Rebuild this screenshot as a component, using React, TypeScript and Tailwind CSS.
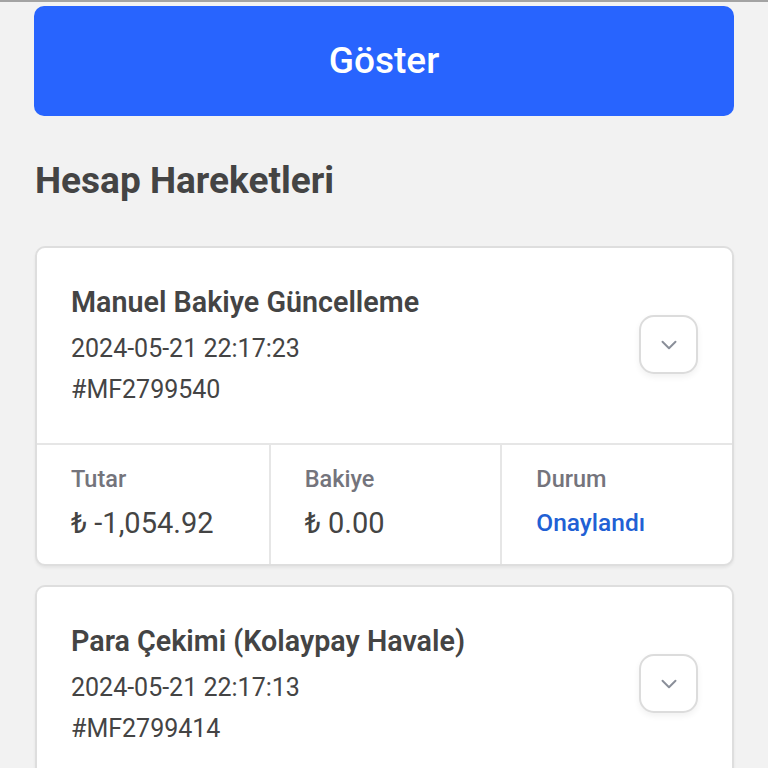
import { ChevronDown } from "lucide-react";

interface Movement {
  title: string;
  date: string;
  code: string;
  amount: string;
  balance: string;
  status: string;
}

const movements: Movement[] = [
  {
    title: "Manuel Bakiye Güncelleme",
    date: "2024-05-21 22:17:23",
    code: "#MF2799540",
    amount: "₺ -1,054.92",
    balance: "₺ 0.00",
    status: "Onaylandı",
  },
  {
    title: "Para Çekimi (Kolaypay Havale)",
    date: "2024-05-21 22:17:13",
    code: "#MF2799414",
    amount: "₺ -500.00",
    balance: "₺ 1,054.92",
    status: "Onaylandı",
  },
];

function MovementCard({ item }: { item: Movement }) {
  return (
    <div className="overflow-hidden rounded-[10px] border-2 border-[#dedede] bg-white shadow-[0_2px_3px_rgba(0,0,0,0.06)]">
      <div className="flex items-center justify-between px-[34px] pt-[34px] pb-[36px]">
        <div>
          <div className="text-[28.7px] font-semibold leading-[40px] text-[#444]">{item.title}</div>
          <div className="mt-[10px] text-[25px] leading-[34px] text-[#444]">{item.date}</div>
          <div className="mt-[7px] text-[25px] leading-[34px] text-[#444]">{item.code}</div>
        </div>
        <button className="flex h-[59px] w-[59px] items-center justify-center rounded-[15px] border-2 border-[#dcdcdc] bg-white shadow-[0_3px_6px_rgba(0,0,0,0.06)]">
          <ChevronDown size={26} strokeWidth={1.8} className="text-[#8a8f99]" />
        </button>
      </div>
      <div className="grid grid-cols-3 border-t-2 border-[#e6e6e6]">
        <div className="px-[34px] pt-[18px] pb-[23px]">
          <div className="text-[23.5px] font-medium leading-[32px] text-[#74747c]">Tutar</div>
          <div className="mt-[10px] text-[29px] leading-[36px] text-[#444]">{item.amount}</div>
        </div>
        <div className="border-l-2 border-[#e6e6e6] px-[34px] pt-[18px] pb-[23px]">
          <div className="text-[23.5px] font-medium leading-[32px] text-[#74747c]">Bakiye</div>
          <div className="mt-[10px] text-[29px] leading-[36px] text-[#444]">{item.balance}</div>
        </div>
        <div className="border-l-2 border-[#e6e6e6] px-[34px] pt-[18px] pb-[23px]">
          <div className="text-[23.5px] font-medium leading-[32px] text-[#74747c]">Durum</div>
          <div className="mt-[10px] text-[24.5px] font-medium leading-[36px] text-[#2160d4]">{item.status}</div>
        </div>
      </div>
    </div>
  );
}

export default function App() {
  return (
    <div className="min-h-screen bg-[#f2f2f2] font-['Roboto',sans-serif]">
      <div className="h-[2px] bg-[#a3a3a3]" />
      <div className="px-[34px] pt-[4px] pb-[40px]">
        <button className="flex h-[110px] w-full items-center justify-center rounded-[10px] bg-[#2864fe] text-[37px] font-medium text-white">
          Göster
        </button>
        <h2 className="mt-[43px] pl-[1px] text-[37px] font-bold leading-[44px] text-[#444]">Hesap Hareketleri</h2>
        <div className="mt-[43px] flex flex-col gap-[19px] pl-[1px]">
          {movements.map((m) => (
            <MovementCard key={m.code} item={m} />
          ))}
        </div>
      </div>
    </div>
  );
}
